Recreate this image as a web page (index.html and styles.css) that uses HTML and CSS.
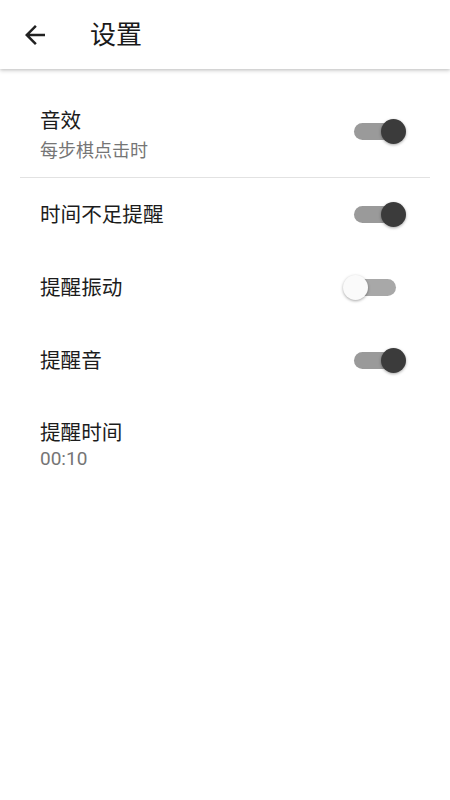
FILE: index.html
```html
<!DOCTYPE html>
<html lang="zh-CN">
<head>
<meta charset="utf-8">
<title>设置</title>
<link rel="stylesheet" href="styles.css">
</head>
<body>
<header class="toolbar">
  <span class="back" aria-label="返回">
    <svg viewBox="0 0 24 24" width="30" height="30"><path d="M20 11H7.83l5.59-5.59L12 4l-8 8 8 8 1.41-1.41L7.83 13H20v-2z" fill="#212121"/></svg>
  </span>
  <h1 class="title">设置</h1>
</header>
<main class="list">
  <div class="pref pref-first">
    <div class="pref-text">
      <div class="pref-title">音效</div>
      <div class="pref-summary">每步棋点击时</div>
    </div>
    <span class="switch on switch-top"><span class="track"></span><span class="thumb"></span></span>
  </div>
  <div class="divider"></div>
  <div class="pref pref-single">
    <div class="pref-title">时间不足提醒</div>
    <span class="switch on"><span class="track"></span><span class="thumb"></span></span>
  </div>
  <div class="pref pref-single">
    <div class="pref-title">提醒振动</div>
    <span class="switch off"><span class="track"></span><span class="thumb"></span></span>
  </div>
  <div class="pref pref-single">
    <div class="pref-title">提醒音</div>
    <span class="switch on"><span class="track"></span><span class="thumb"></span></span>
  </div>
  <div class="pref pref-last">
    <div class="pref-text">
      <div class="pref-title">提醒时间</div>
      <div class="pref-summary pref-value">00:10</div>
    </div>
  </div>
</main>
</body>
</html>
```
FILE: styles.css
```css
html, body {
  margin: 0;
  padding: 0;
  background: #ffffff;
}
body {
  font-family: Roboto, "Noto Sans CJK SC", sans-serif;
  color: #212121;
  width: 450px;
  min-height: 800px;
}
.toolbar {
  height: 69px;
  display: flex;
  align-items: center;
  padding-left: 20px;
  background: #ffffff;
  box-shadow: 0 2px 4px rgba(0, 0, 0, 0.16), 0 1px 2px rgba(0, 0, 0, 0.08);
  position: relative;
  z-index: 1;
}
.back {
  width: 30px;
  height: 30px;
  display: flex;
}
.title {
  margin: 0 0 0 40px;
  font-size: 26px;
  font-weight: 400;
  line-height: 32px;
  color: #1a1a1a;
}
.list {
  display: flex;
  flex-direction: column;
}
.pref {
  display: flex;
  align-items: center;
  padding: 0 44px 0 40px;
}
.pref-first {
  align-items: flex-start;
  padding-top: 39px;
  padding-bottom: 15px;
}
.pref-single {
  height: 73px;
}
.pref-last {
  padding-top: 23px;
}
.pref-text {
  display: flex;
  flex-direction: column;
}
.pref-title {
  font-size: 20.6px;
  line-height: 26px;
  color: #1c1c1c;
}
.pref-summary {
  margin-top: 5px;
  font-size: 18px;
  line-height: 23px;
  color: #757575;
}
.pref-value {
  margin-top: 1px;
  font-size: 19px;
}
.divider {
  height: 1px;
  margin: 0 20px;
  background: #e2e2e2;
}
.switch {
  margin-left: auto;
  width: 64px;
  height: 26px;
  display: flex;
  align-items: center;
  position: relative;
}
.switch-top {
  margin-top: 10px;
}
.track {
  margin-left: 12px;
  width: 42px;
  height: 17px;
  border-radius: 8.5px;
}
.switch.on .track {
  background: #9a9a9a;
}
.switch.off .track {
  background: #a8a8a8;
}
.thumb {
  position: absolute;
  top: 0.5px;
  width: 25px;
  height: 25px;
  border-radius: 50%;
  box-shadow: 0 1px 3px rgba(0, 0, 0, 0.35);
}
.switch.on .thumb {
  left: 38.5px;
  background: #3b3b3b;
}
.switch.off .thumb {
  left: 1px;
  background: #fafafa;
}
```
